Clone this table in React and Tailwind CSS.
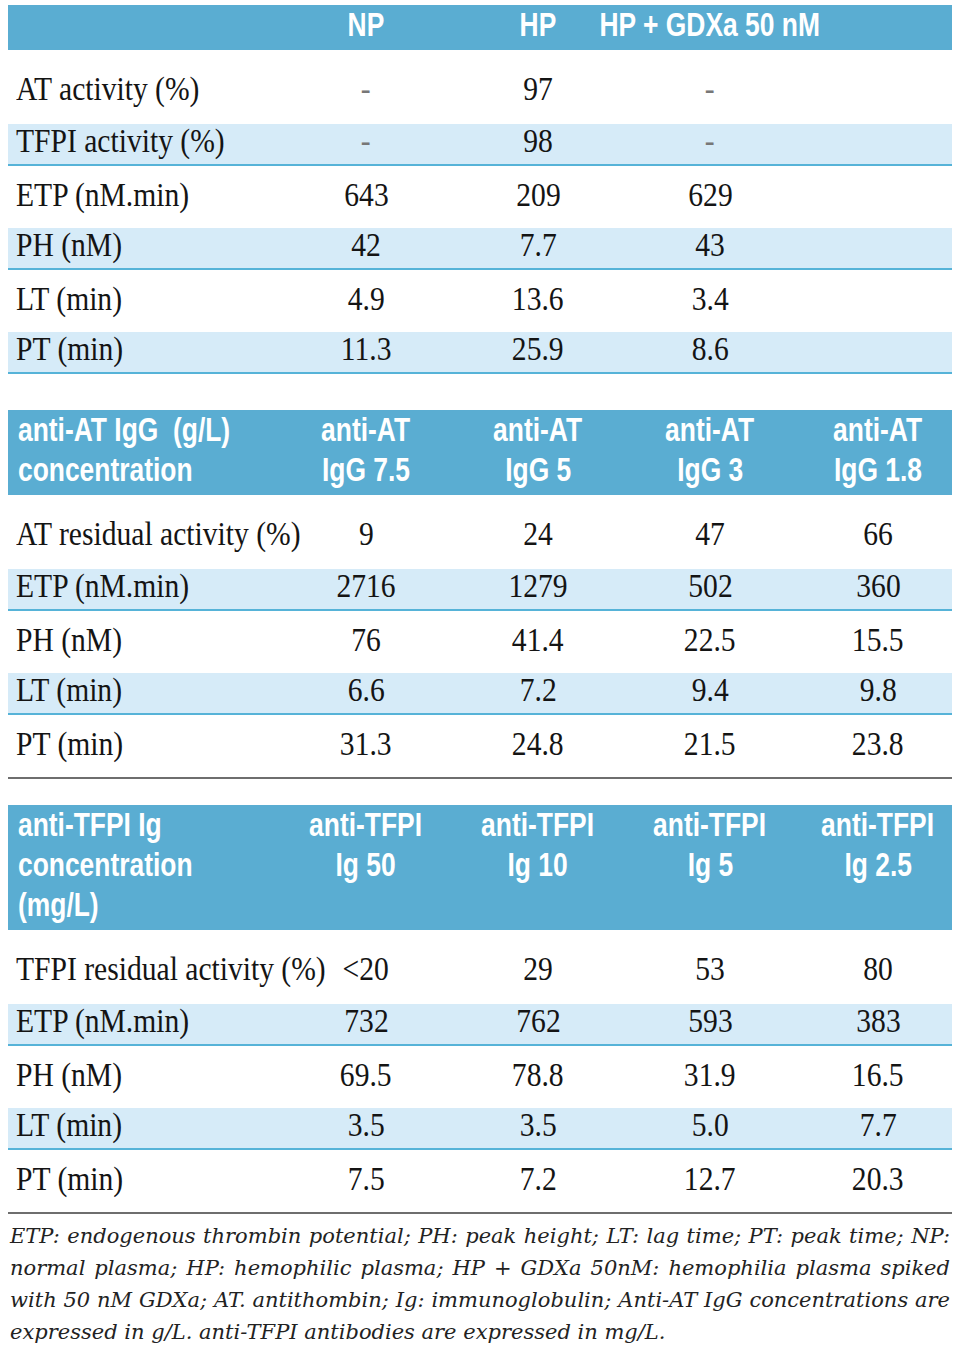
import React from "react";

const cols = "grid grid-cols-[272px_172px_172px_172px_156px]";
const sans = "font-['Liberation_Sans',sans-serif] font-bold text-white";
const serif = "font-['Liberation_Serif',serif] text-[34px] leading-[34px] text-[#141414]";

const sections = [
  {
    head: [[""], ["NP"], ["HP"], ["HP + GDXa 50 nM"], [""]],
    headH: "h-[45px]",
    rows: [
      ["AT activity (%)", "-", "97", "-", ""],
      ["TFPI activity (%)", "-", "98", "-", ""],
      ["ETP (nM.min)", "643", "209", "629", ""],
      ["PH (nM)", "42", "7.7", "43", ""],
      ["LT (min)", "4.9", "13.6", "3.4", ""],
      ["PT (min)", "11.3", "25.9", "8.6", ""],
    ],
    grayLine: false,
  },
  {
    head: [
      ["anti-AT IgG\u00a0\u00a0(g/L)", "concentration"],
      ["anti-AT", "IgG 7.5"],
      ["anti-AT", "IgG 5"],
      ["anti-AT", "IgG 3"],
      ["anti-AT", "IgG 1.8"],
    ],
    headH: "h-[85px]",
    rows: [
      ["AT residual activity (%)", "9", "24", "47", "66"],
      ["ETP (nM.min)", "2716", "1279", "502", "360"],
      ["PH (nM)", "76", "41.4", "22.5", "15.5"],
      ["LT (min)", "6.6", "7.2", "9.4", "9.8"],
      ["PT (min)", "31.3", "24.8", "21.5", "23.8"],
    ],
    grayLine: true,
  },
  {
    head: [
      ["anti-TFPI Ig", "concentration", "(mg/L)"],
      ["anti-TFPI", "Ig 50"],
      ["anti-TFPI", "Ig 10"],
      ["anti-TFPI", "Ig 5"],
      ["anti-TFPI", "Ig 2.5"],
    ],
    headH: "h-[125px]",
    rows: [
      ["TFPI residual activity (%)", "<20", "29", "53", "80"],
      ["ETP (nM.min)", "732", "762", "593", "383"],
      ["PH (nM)", "69.5", "78.8", "31.9", "16.5"],
      ["LT (min)", "3.5", "3.5", "5.0", "7.7"],
      ["PT (min)", "7.5", "7.2", "12.7", "20.3"],
    ],
    grayLine: true,
  },
];

function HeadRow({ head, headH }) {
  return (
    <div className={`${cols} ${headH} bg-[#5aadd2] ${sans} text-[33px] leading-[40px]`}>
      {head.map((lines, i) => (
        <div
          key={i}
          className={
            i === 0
              ? "pl-[10px] flex flex-col items-start whitespace-nowrap"
              : i === 4
              ? "pl-2 flex flex-col items-center whitespace-nowrap"
              : "flex flex-col items-center whitespace-nowrap"
          }
        >
          {lines.map((l, j) => (
            <span
              key={j}
              className={i === 0 ? "inline-block origin-left scale-x-[0.8]" : "inline-block scale-x-[0.8]"}
            >
              {l}
            </span>
          ))}
        </div>
      ))}
    </div>
  );
}

function DataRow({ cells, index }) {
  const shaded = index % 2 === 1;
  let rowCls = "h-[62px] pt-[12px]";
  if (index === 0) rowCls = "h-[74px] pt-[22px]";
  if (shaded) rowCls = "h-[42px] pt-0 bg-[#d6ebf8] border-b-2 border-[#56b3d8]";

  return (
    <div className={`${cols} ${rowCls} ${serif}`}>
      {cells.map((c, i) => (
        <div
          key={i}
          className={
            i === 0
              ? "pl-2 whitespace-nowrap"
              : i === 4
              ? "pl-2 flex justify-center whitespace-nowrap"
              : "flex justify-center whitespace-nowrap"
          }
        >
          <span
            className={
              i === 0
                ? "inline-block origin-left scale-x-[0.87]"
                : c === "-"
                ? "inline-block scale-x-[0.87] text-[#777]"
                : "inline-block scale-x-[0.87]"
            }
          >
            {c}
          </span>
        </div>
      ))}
    </div>
  );
}

export default function App() {
  return (
    <div className="min-h-screen bg-white pt-[5px]">
      <div className="w-[944px] ml-[8px]">
        {sections.map((s, si) => (
          <div key={si} className={si === 1 ? "mt-[36px]" : si === 2 ? "mt-[26px]" : ""}>
            <HeadRow head={s.head} headH={s.headH} />
            {s.rows.map((r, ri) => (
              <DataRow key={ri} cells={r} index={ri} />
            ))}
            {s.grayLine && <div className="h-[2px] bg-[#6e6e6e]" />}
          </div>
        ))}

        {/* Footnote */}
        <div className="mt-[6px] px-[2px] font-['DejaVu_Serif',serif] italic text-[21px] leading-[32px] text-[#222]">
          <p className="text-justify [text-align-last:justify]">
            ETP: endogenous thrombin potential; PH: peak height; LT: lag time; PT: peak time; NP:
          </p>
          <p className="text-justify [text-align-last:justify]">
            normal plasma; HP: hemophilic plasma; HP + GDXa 50nM: hemophilia plasma spiked
          </p>
          <p className="text-justify [text-align-last:justify]">
            with 50 nM GDXa; AT. antithombin; Ig: immunoglobulin; Anti-AT IgG concentrations are
          </p>
          <p>expressed in g/L. anti-TFPI antibodies are expressed in mg/L.</p>
        </div>
      </div>
    </div>
  );
}
